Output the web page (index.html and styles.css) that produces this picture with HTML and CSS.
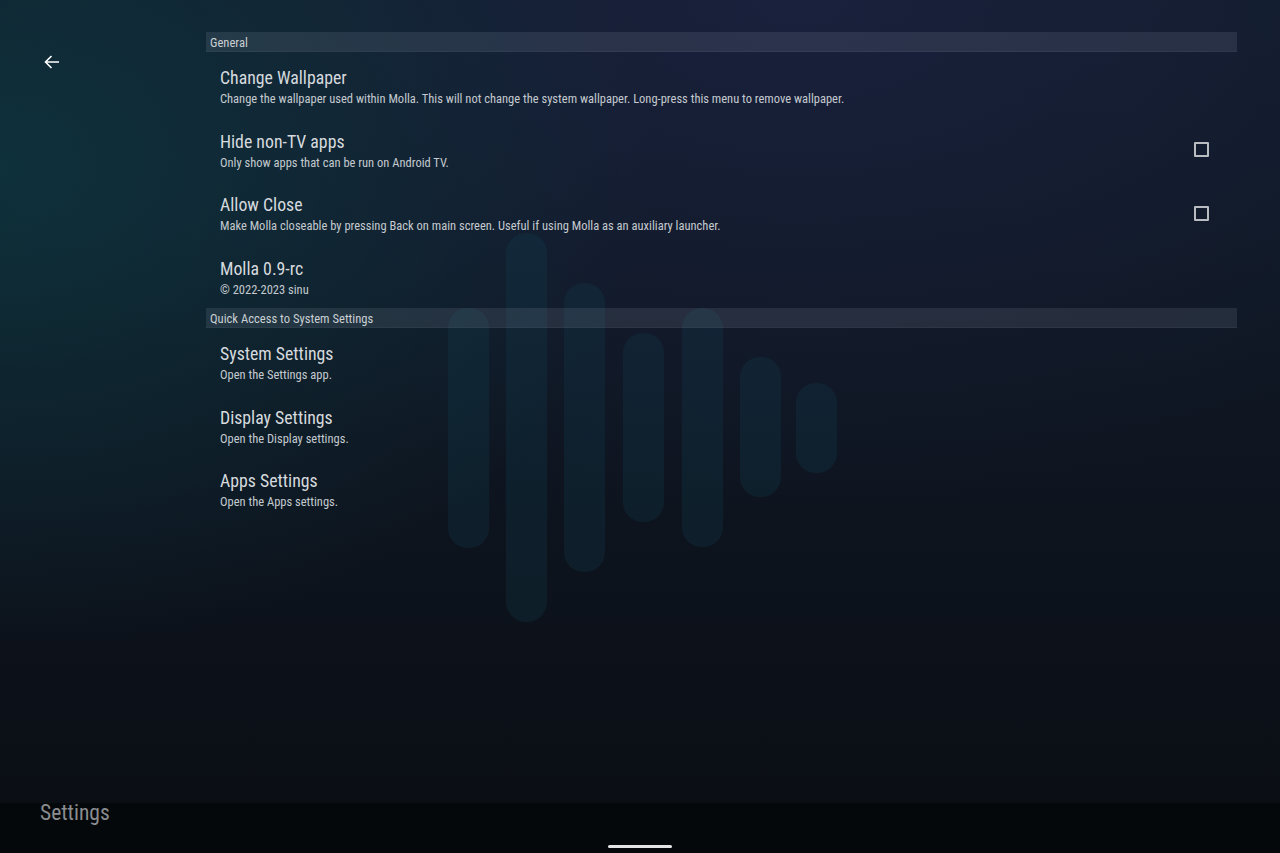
FILE: index.html
```html
<!DOCTYPE html>
<html lang="en">
<head>
<meta charset="utf-8">
<title>Settings</title>
<link rel="stylesheet" href="styles.css">
</head>
<body>
<div class="wallpaper" aria-hidden="true">
  <span class="pill" style="left:448px;top:308px;height:240px"></span>
  <span class="pill" style="left:506px;top:233px;height:389px"></span>
  <span class="pill" style="left:564px;top:283px;height:289px"></span>
  <span class="pill" style="left:623px;top:333px;height:189px"></span>
  <span class="pill" style="left:682px;top:308px;height:239px"></span>
  <span class="pill" style="left:740px;top:357px;height:140px"></span>
  <span class="pill" style="left:796px;top:383px;height:90px"></span>
</div>
<div class="screen">
  <main class="main">
    <div class="nav">
      <button class="back" aria-label="Back">
        <svg width="16" height="14" viewBox="0 0 16 14"><path d="M15 7H1.5M7.5 1L1.5 7l6 6" fill="none" stroke="#fff" stroke-width="1.6"/></svg>
      </button>
    </div>
    <div class="content">
      <div class="section-header">General</div>
      <div class="item">
        <div class="text">
          <div class="title">Change Wallpaper</div>
          <div class="summary">Change the wallpaper used within Molla. This will not change the system wallpaper. Long-press this menu to remove wallpaper.</div>
        </div>
      </div>
      <div class="item">
        <div class="text">
          <div class="title">Hide non-TV apps</div>
          <div class="summary">Only show apps that can be run on Android TV.</div>
        </div>
        <span class="checkbox"></span>
      </div>
      <div class="item">
        <div class="text">
          <div class="title">Allow Close</div>
          <div class="summary">Make Molla closeable by pressing Back on main screen. Useful if using Molla as an auxiliary launcher.</div>
        </div>
        <span class="checkbox"></span>
      </div>
      <div class="item">
        <div class="text">
          <div class="title">Molla 0.9-rc</div>
          <div class="summary">© 2022-2023 sinu</div>
        </div>
      </div>
      <div class="section-header second">Quick Access to System Settings</div>
      <div class="item">
        <div class="text">
          <div class="title">System Settings</div>
          <div class="summary">Open the Settings app.</div>
        </div>
      </div>
      <div class="item">
        <div class="text">
          <div class="title">Display Settings</div>
          <div class="summary">Open the Display settings.</div>
        </div>
      </div>
      <div class="item">
        <div class="text">
          <div class="title">Apps Settings</div>
          <div class="summary">Open the Apps settings.</div>
        </div>
      </div>
    </div>
  </main>
  <footer class="footer">
    <div class="footer-title">Settings</div>
    <div class="handle"></div>
  </footer>
</div>
</body>
</html>
```
FILE: styles.css
```css
html, body {
  margin: 0;
  padding: 0;
  width: 1280px;
  height: 853px;
  overflow: hidden;
}
body {
  font-family: "Roboto", "Liberation Sans", sans-serif;
  font-stretch: condensed;
  color: #d4d8dc;
  background:
    radial-gradient(ellipse 650px 480px at 0px 170px, rgba(14, 55, 65, 0.8), rgba(14, 55, 65, 0) 100%),
    radial-gradient(ellipse 900px 500px at 800px 0px, rgba(30, 35, 70, 0.7), rgba(30, 35, 70, 0) 100%),
    linear-gradient(to bottom, #0f1b26 0%, #0e1520 55%, #0a0d13 100%);
  position: relative;
}
.wallpaper {
  position: absolute;
  inset: 0;
  pointer-events: none;
}
.pill {
  position: absolute;
  width: 41px;
  border-radius: 20px;
  background: rgba(20, 75, 90, 0.22);
}
.screen {
  position: relative;
  display: flex;
  flex-direction: column;
  height: 853px;
}
.main {
  flex: 1;
  display: flex;
  padding-top: 32px;
  padding-right: 43px;
}
.nav {
  width: 206px;
  flex: none;
}
.back {
  margin: 22px 0 0 43px;
  padding: 0;
  background: none;
  border: 0;
  width: 18px;
  height: 16px;
  display: flex;
  align-items: center;
  justify-content: center;
}
.content {
  flex: 1;
  display: flex;
  flex-direction: column;
}
.section-header {
  height: 20px;
  line-height: 21px;
  padding-left: 4px;
  font-size: 12.6px;
  color: #c9cfd3;
  background: rgba(200, 210, 230, 0.11);
  box-shadow: inset 0 -1px 0 rgba(255, 255, 255, 0.04);
}
.section-header.second {
  margin-top: 2px;
}
.item {
  display: flex;
  align-items: center;
  padding: 15px 28px 7.5px 14px;
  height: 41px;
}
.text {
  flex: 1;
  min-width: 0;
}
.title {
  font-size: 17.8px;
  line-height: 22px;
  color: #d6dade;
  white-space: nowrap;
}
.summary {
  margin-top: 1px;
  font-size: 12.5px;
  line-height: 18px;
  color: #c4cacf;
  white-space: nowrap;
}
.checkbox {
  width: 11px;
  height: 11px;
  border: 2px solid #b9bcc0;
  border-radius: 1px;
  margin-bottom: 3px;
  flex: none;
}
.footer {
  height: 50px;
  flex: none;
  background: #05080b;
  position: relative;
  display: flex;
  flex-direction: column;
  align-items: center;
}
.footer-title {
  align-self: flex-start;
  margin: 0 0 0 40px;
  font-size: 21.5px;
  line-height: 20px;
  color: #8a8d90;
}
.handle {
  margin-top: 22px;
  width: 64px;
  height: 3px;
  border-radius: 2px;
  background: #e2e4e6;
}
```
